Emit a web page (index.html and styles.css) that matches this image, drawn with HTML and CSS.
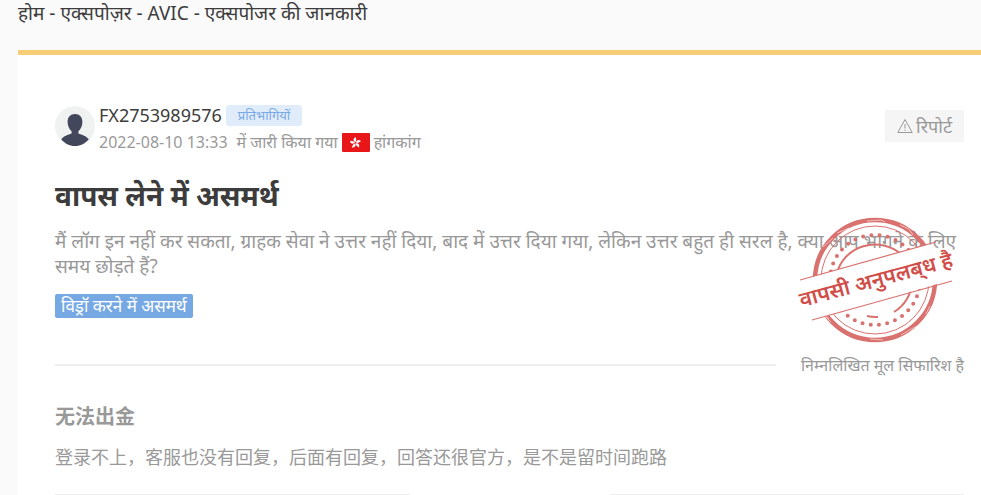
FILE: index.html
```html
<!DOCTYPE html>
<html lang="hi">
<head>
<meta charset="utf-8">
<title>AVIC - एक्सपोजर की जानकारी</title>
<link rel="stylesheet" href="styles.css">
</head>
<body>
<nav class="crumbs"><a href="#">होम</a> - <a href="#">एक्सपोज़र</a> - <a href="#">AVIC</a> - <span>एक्सपोजर की जानकारी</span></nav>
<main class="card">
  <header class="author">
    <svg class="avatar" viewBox="0 0 40 40" aria-hidden="true">
      <circle cx="20" cy="20" r="20" fill="#f0f2f2"/>
      <path d="M20 8c-4.600 0-7.400 3.200-7.400 8 0 3.600 1.600 7.200 4 9.200v2.200c-3.600 1.400-8 2.400-10.400 5.800C9.600 37.400 14.500 40 20 40s10.400-2.600 13.800-6.800c-2.400-3.400-6.800-4.400-10.400-5.800v-2.200c2.400-2 4-5.600 4-9.200 0-4.800-2.800-8-7.400-8z" fill="#43475b"/>
    </svg>
    <div class="who">
      <div class="name-row"><span class="name">FX2753989576</span><span class="role">प्रतिभागियों</span></div>
      <div class="meta"><time>2022-08-10 13:33</time><span class="issued">में जारी किया गया</span>
        <svg class="flag" viewBox="0 0 28 19" aria-hidden="true">
          <rect width="28" height="19" rx="1" fill="#e81519"/>
          <g fill="#fff" transform="translate(13.500 9.800)">
            <path id="petal" d="M0 -.6C-2.600-1.600-2.600-5 .6-5.800-.4-4.200 2-3.200 0-.6z"/>
            <use href="#petal" transform="rotate(72)"/><use href="#petal" transform="rotate(144)"/>
            <use href="#petal" transform="rotate(216)"/><use href="#petal" transform="rotate(288)"/>
          </g>
        </svg><span>हांगकांग</span></div>
    </div>
    <button class="report" type="button">
      <svg viewBox="0 0 16 16" aria-hidden="true" fill="none" stroke="#999" stroke-linejoin="round"><path d="M8 1.500 15.200 14.500H.8z"/><path d="M8 6v4.500M8 11.800v1.200"/></svg>रिपोर्ट</button>
  </header>
  <article class="post">
    <h1>वापस लेने में असमर्थ</h1>
    <p class="body">मैं लॉग इन नहीं कर सकता, ग्राहक सेवा ने उत्तर नहीं दिया, बाद में उत्तर दिया गया, लेकिन उत्तर बहुत ही सरल है, क्या आप भागने के लिए समय छोड़ते हैं?</p>
    <a class="tag" href="#">विड्रॉ करने में असमर्थ</a>
    <svg class="stamp" viewBox="0 0 160 130" role="img" aria-label="वापसी अनुपलब्ध है">
      <g fill="none" stroke="#d9716e">
        <circle cx="78" cy="65" r="60" stroke-width="4.500"/>
        <circle cx="78" cy="65" r="54" stroke-width="1"/>
        <circle cx="78" cy="65" r="45" stroke-width="4" stroke-linecap="round" stroke-dasharray="0 8.320"/>
        <path d="M40 58A39 37 0 0 1 104 39M115 67A37 37 0 0 1 97 97M81 102A37 37 0 0 1 70 101" stroke-width="2"/>
      </g>
      <g fill="none" stroke="#fff" stroke-width=".8" opacity=".7">
        <path d="M26 32l10-9M40 18l12-5 3 1M70 6l14-1 4 2M103 10l9 4 4 6M128 30l4 6M104 120l14-8 5-1M73 124l13 1M28 101l6 6M24 95l8 9M133 91l-4 8"/>
      </g>
      <path d="M4 65 133 29 143 38 154 65 16 105z" fill="#fff"/>
      <path d="M3 65 139 27M15 105 155 66" stroke="#d9716e" stroke-width="1.200"/>
      <text class="stamp-text" x="79" y="72" text-anchor="middle" transform="rotate(-15 79 65)">वापसी अनुपलब्&zwnj;ध है</text>
    </svg>
  </article>
  <div class="divider"><span>निम्नलिखित मूल सिफारिश है</span></div>
  <section class="original" lang="zh">
    <h2>无法出金</h2>
    <p>登录不上，客服也没有回复，后面有回复，回答还很官方，是不是留时间跑路</p>
  </section>
  <div class="split"></div>
</main>
</body>
</html>
```
FILE: styles.css
```css
* { box-sizing: border-box; }
body {
  margin: 0;
  background: #fafafa;
  color: #3c3c3c;
  font-family: "Noto Sans", "Noto Sans CJK SC", sans-serif;
  font-size: 16px;
}
h1, h2, p { margin: 0; }
a { color: inherit; text-decoration: none; }
.crumbs { padding: 0 18px; height: 50px; font-size: 19px; line-height: 26px; }
.card {
  margin-left: 18px;
  padding: 50px 17px 0 37px;
  background: #fff;
  border-top: 5px solid #f8cd78;
}
.author { display: flex; align-items: flex-start; gap: 4px; }
.avatar { width: 40px; height: 40px; margin-top: 1px; flex: none; }
.who { flex: 1; }
.name-row { display: flex; align-items: center; gap: 4px; height: 20px; }
.name { font-size: 18px; line-height: 20px; }
.role {
  padding: 0 12px;
  border-radius: 3px;
  background: #e1ecfa;
  color: #78a9e6;
  font-size: 13px;
  line-height: 21px;
}
.meta { display: flex; align-items: center; gap: 4px; margin-top: 6px; color: #999; font-size: 16px; line-height: 22px; }
.issued { margin-left: 5px; }
.flag { width: 28px; height: 19px; }
.report {
  display: flex;
  align-items: center;
  gap: 3px;
  height: 32px;
  margin-top: 5px;
  padding: 0 12px;
  border: 0;
  background: #f5f5f5;
  color: #999;
  font-family: inherit;
  font-size: 18px;
}
.report svg { width: 16px; height: 16px; }
.post { position: relative; margin-top: 20px; }
h1 { font-size: 28px; font-weight: 700; line-height: 44px; }
.body { margin-top: 12px; color: #999; font-size: 19px; line-height: 25px; }
.tag {
  display: inline-block;
  margin-top: 15px;
  padding: 0 6px;
  border-radius: 2px;
  background: #76a9e4;
  color: #fff;
  font-size: 17px;
  line-height: 24px;
}
.stamp { position: absolute; right: 7px; top: 42px; width: 160px; height: 130px; overflow: visible; }
.stamp-text { fill: #d14d48; font-size: 21px; font-weight: 600; }
.divider { display: flex; align-items: center; gap: 25px; margin-top: 35px; color: #999; font-size: 16px; line-height: 24px; }
.divider::before { content: ""; flex: 1; height: 2px; background: #eee; }
.original { margin-top: 25px; color: #999; }
h2 { font-size: 20px; line-height: 30px; }
.original p { margin-top: 12px; font-size: 18px; line-height: 26px; }
.split { display: flex; gap: 200px; margin-top: 24px; }
.split::before, .split::after { content: ""; flex: 1; height: 2px; background: #eee; }
```
